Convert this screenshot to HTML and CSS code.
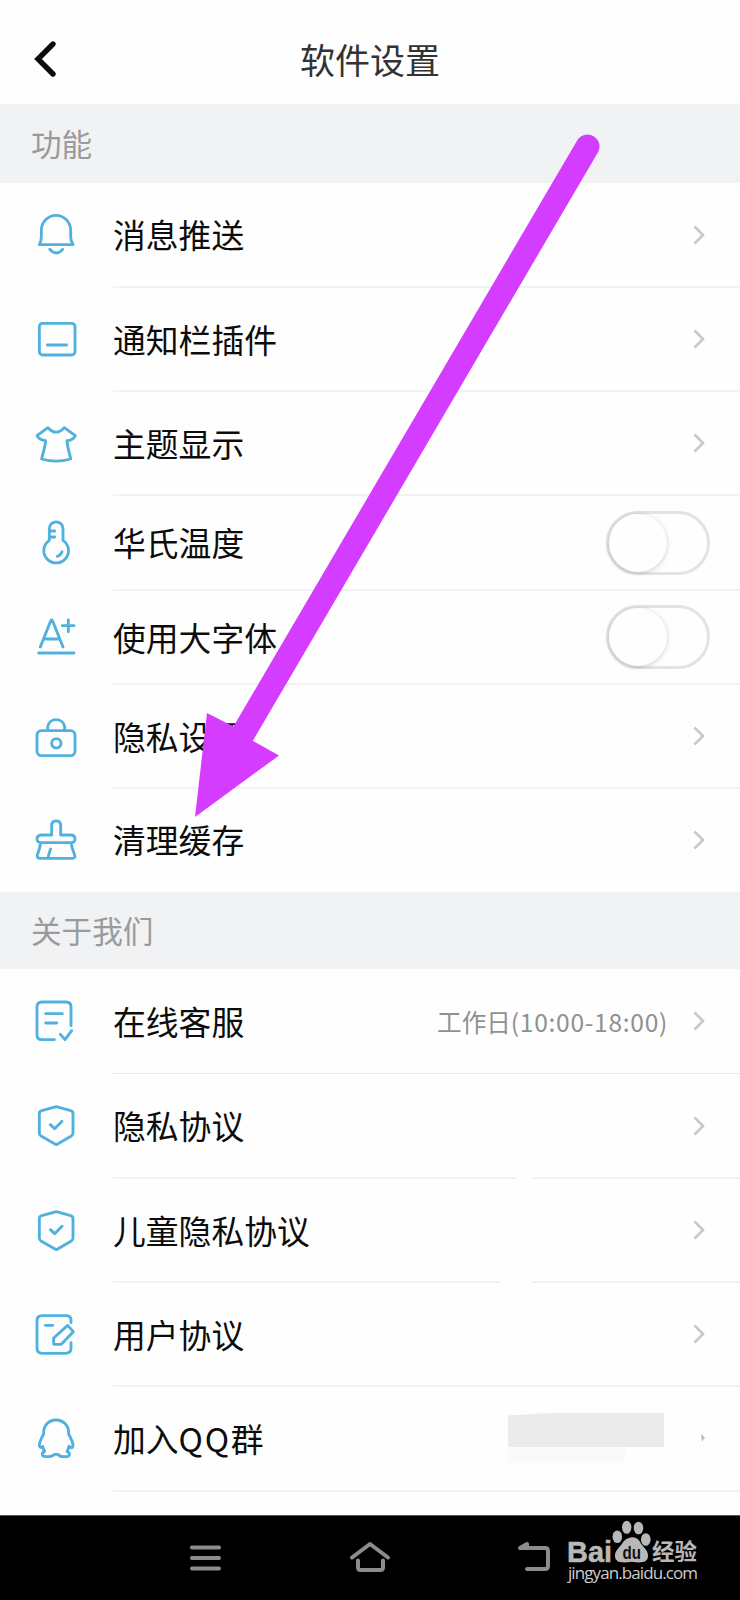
FILE: index.html
```html
<!DOCTYPE html>
<html lang="zh-CN">
<head>
<meta charset="utf-8">
<title>软件设置</title>
<link rel="stylesheet" href="styles.css">
</head>
<body>
<div class="screen">
  <header class="header">
    <svg class="back" viewBox="0 0 24 38"><path d="M19 4 4 19l15 15"/></svg>
    <h1 class="title">软件设置</h1>
  </header>

  <h2 class="section section-first">功能</h2>
  <ul class="list">
    <li class="row h105">
      <svg class="icon" viewBox="96 634 144 144"><path d="M118 738h101q-7-12-7-24v-19a44 45 0 0 0-88 0v19q0 14-6 24zM149 752q20 22 39 0"/></svg>
      <div class="body"><span class="label">消息推送</span><svg class="chev" viewBox="0 0 16 24"><path d="M2.500 3.500 11 12l-8.500 8.500"/></svg></div>
    </li>
    <li class="row h104">
      <svg class="icon" viewBox="96 43 144 144"><rect x="118" y="68" width="107" height="95" rx="10"/><path d="M142 133h58"/></svg>
      <div class="body"><span class="label">通知栏插件</span><svg class="chev" viewBox="0 0 16 24"><path d="M2.500 3.500 11 12l-8.500 8.500"/></svg></div>
    </li>
    <li class="row h104">
      <svg class="icon" viewBox="96 355 144 144"><path d="M144 381q25 27 49 0l33 24q-9 15-25 15c1 23 8 36 11 55q-44 13-87 0c3-19 11-33 12-55q-18-2-26-15z"/></svg>
      <div class="body"><span class="label">主题显示</span><svg class="chev" viewBox="0 0 16 24"><path d="M2.500 3.500 11 12l-8.500 8.500"/></svg></div>
    </li>
    <li class="row h95">
      <svg class="icon" viewBox="96 654 144 144"><path d="M148 721v-35a20 20 0 0 1 41 0v35a37 37 0 1 1-41 0zM149 693h15M149 711h15M172 769q10-3 14-14"/></svg>
      <div class="body"><span class="label">华氏温度</span><span class="toggle"><span class="knob"></span></span></div>
    </li>
    <li class="row h94">
      <svg class="icon" viewBox="96 66 144 144"><path d="M121 168l31-78q3-6 6 0l31 78M132 144h46M205 87v35M187 104h35M116 186h106"/></svg>
      <div class="body"><span class="label">使用大字体</span><span class="toggle"><span class="knob"></span></span></div>
    </li>
    <li class="row h104">
      <svg class="icon" viewBox="96 363 144 144"><rect x="111" y="419" width="114" height="75" rx="13"/><path d="M143 417v-10a26 26 0 0 1 51 0v10"/><circle cx="169" cy="457" r="14"/></svg>
      <div class="body"><span class="label">隐私设置</span><svg class="chev" viewBox="0 0 16 24"><path d="M2.500 3.500 11 12l-8.500 8.500"/></svg></div>
    </li>
    <li class="row h103 no-line">
      <svg class="icon" viewBox="96 678 144 144"><path d="M155 738v-32a14 14 0 0 1 27 0v32h29q14 0 14 12t-14 11h-86q-14 0-14-11t14-12zM122 762q-2 14-10 36-2 10 9 10h96q10 0 7-10-8-20-11-36M152 780q-5 12-8 28"/></svg>
      <div class="body"><span class="label">清理缓存</span><svg class="chev" viewBox="0 0 16 24"><path d="M2.500 3.500 11 12l-8.500 8.500"/></svg></div>
    </li>
  </ul>

  <h2 class="section">关于我们</h2>
  <ul class="list">
    <li class="row h105 thin">
      <svg class="icon" viewBox="96 349 144 144"><path d="M163 480h-37q-15 0-15-15v-83q0-15 15-15h72q15 0 15 15v56M137 402h50M137 430h33M181 464l14 16 20-27"/></svg>
      <div class="body"><span class="label">在线客服</span><span class="hours">工作日<span class="digits">(10:00-18:00)</span></span><svg class="chev" viewBox="0 0 16 24"><path d="M2.500 3.500 11 12l-8.500 8.500"/></svg></div>
    </li>
    <li class="row h105 break-a">
      <svg class="icon" viewBox="96 663 144 144"><path d="M169 680l43 12q7 2 7 9v58q0 6-5 9l-45 26-46-26q-5-3-5-9v-58q0-7 7-9zM151 734l13 12 22-22"/></svg>
      <div class="body"><span class="label">隐私协议</span><svg class="chev" viewBox="0 0 16 24"><path d="M2.500 3.500 11 12l-8.500 8.500"/></svg></div>
    </li>
    <li class="row h104 break-b">
      <svg class="icon" viewBox="96 663 144 144"><path d="M169 680l43 12q7 2 7 9v58q0 6-5 9l-45 26-46-26q-5-3-5-9v-58q0-7 7-9zM151 734l13 12 22-22"/></svg>
      <div class="body"><span class="label">儿童隐私协议</span><svg class="chev" viewBox="0 0 16 24"><path d="M2.500 3.500 11 12l-8.500 8.500"/></svg></div>
    </li>
    <li class="row h104">
      <svg class="icon" viewBox="96 389 144 144"><path d="M213 427v-8q0-13-15-13h-72q-15 0-15 15v83q0 15 15 15h72q15 0 15-15v-17M136 435h22M203 435l17 19-36 38h-23v-19z"/></svg>
      <div class="body"><span class="label">用户协议</span><svg class="chev" viewBox="0 0 16 24"><path d="M2.500 3.500 11 12l-8.500 8.500"/></svg></div>
    </li>
    <li class="row h105">
      <svg class="icon" viewBox="96 702 144 144"><path d="M131 762c-2-24 14-42 37-42s40 18 38 42c6 12 12 22 13 34 0 9-6 9-12 3q-2 10-6 15 9 4 7 11-1 6-17 5-12 0-17-7h-11q-6 7-18 7-17 0-18-6-1-7 7-10-4-6-6-15-6 8-10-1c-1-12 7-25 13-36z"/></svg>
      <div class="body"><span class="label">加入<span class="latin">QQ</span>群</span><span class="mosaic"></span><svg class="stub" viewBox="0 0 6 10"><path d="M1 1l4 4-2 2-1 2z"/></svg></div>
    </li>
  </ul>

  <nav class="nav">
    <svg class="nav-menu" viewBox="0 0 36 30"><path d="M4 4.500h27M4 15h27M4 25.500h27"/></svg>
    <svg class="nav-home" viewBox="0 0 42 34"><path d="M3 17.500 21 4l18 13.500M9 20.500v7q0 2.500 3 2.500h19q3 0 3-2.500v-7"/></svg>
    <svg class="nav-back" viewBox="0 0 36 32"><path d="M4 7h24q3 0 3 3v15q0 3-3 3H10"/><path d="M3 7l7-4v4z"/></svg>
  </nav>

  <svg class="watermark" viewBox="0 0 150 80">
    <text class="wm-bold" x="7" y="46.500" font-size="29" textLength="45" lengthAdjust="spacingAndGlyphs">Bai</text>
    <ellipse cx="57.300" cy="21.700" rx="4.800" ry="6.300"/>
    <ellipse cx="66.700" cy="12.300" rx="4.700" ry="6.500"/>
    <ellipse cx="78.500" cy="13" rx="4.800" ry="6.300"/>
    <ellipse cx="85.800" cy="24.500" rx="4.800" ry="6.300"/>
    <path d="M70 22.700c6-1.500 9 2 11 6 4 5 7 7 7 12 0 7-7 7.500-16.500 6-9.500 1.500-16.500 1-16.500-6 0-5 4-8 7-12 2-3 4-5.500 8-6z"/>
    <text class="wm-du" x="62.500" y="43.500" font-size="18" textLength="18.500" lengthAdjust="spacingAndGlyphs">du</text>
    <text class="wm-cjk" x="92" y="44.500" font-size="22.500" textLength="45">经验</text>
    <text class="wm-url" x="8" y="64" font-size="17" textLength="130">jingyan.baidu.com</text>
  </svg>

  <svg class="arrow" viewBox="0 0 740 1600">
    <path class="shaft" d="M587.500 146.500 240 739"/>
    <path class="head" d="M195 817 207 713l27.500 14L253 741l26 14.500z"/>
  </svg>
</div>
</body>
</html>
```
FILE: styles.css
```css
* { box-sizing: border-box; }

body {
  margin: 0;
  background: #fefefe;
  color: #0c0c0c;
  font-family: "Noto Sans CJK SC", sans-serif;
}

.screen {
  position: relative;
  width: 740px;
  height: 1600px;
  overflow: hidden;
  display: flex;
  flex-direction: column;
}

.header {
  display: grid;
  grid-template-columns: 68px 1fr 68px;
  align-items: center;
  height: 104px;
  padding-top: 14px;
}

.back {
  width: 24px;
  height: 38px;
  margin: 0 0 0 34px;
  fill: none;
  stroke: #0c0c0c;
  stroke-width: 5.4;
  stroke-linecap: round;
}

.title {
  margin: 0;
  text-align: center;
  font-size: 35px;
  font-weight: 400;
  line-height: 50px;
  color: #333;
}

.section {
  display: flex;
  align-items: center;
  height: 77px;
  margin: 0;
  padding: 0 0 2px 31px;
  background: #f1f2f4;
  color: #9a9a9c;
  font-size: 30.6px;
  font-weight: 400;
}

.section-first { height: 79px; }

.list {
  margin: 0;
  padding: 0;
  list-style: none;
}

.row {
  display: flex;
  gap: 33px;
  padding-left: 32px;
}

.h94 { height: 94px; }
.h95 { height: 95px; }
.h103 { height: 103px; }
.h104 { height: 104px; }
.h105 { height: 105px; }

.icon {
  width: 48px;
  height: 48px;
  align-self: center;
  margin-bottom: 3px;
  fill: none;
  stroke: #50b1de;
  stroke-width: 8.6;
  stroke-linecap: round;
  stroke-linejoin: round;
}

.body {
  position: relative;
  flex: 1;
  display: flex;
  align-items: center;
  padding-right: 32px;
  border-bottom: 2px solid #f2f2f2;
}

.no-line .body { border-bottom: 0; padding-bottom: 2px; }
.thin .body { border-bottom: 1px solid #e9e9e9; }

.break-a .body::after,
.break-b .body::after {
  content: "";
  position: absolute;
  bottom: -2px;
  height: 2px;
  background: #fefefe;
}

.break-a .body::after { left: 403px; width: 17px; }
.break-b .body::after { left: 387px; width: 32px; }

.label {
  flex: 1;
  padding-bottom: 1px;
  font-size: 32.8px;
  line-height: 46px;
}

.latin { letter-spacing: 1.7px; }

.chev {
  width: 16px;
  height: 24px;
  fill: none;
  stroke: #c8c8c8;
  stroke-width: 2.6;
}

.toggle {
  width: 104px;
  height: 64px;
  margin-right: -2px;
  border: 3px solid #e3e3e3;
  border-radius: 32px;
}

.knob {
  display: block;
  width: 58px;
  height: 58px;
  border-radius: 50%;
  background: #fefefe;
  box-shadow: 0 1px 5px rgba(0, 0, 0, 0.2);
}

.hours {
  margin-right: 24px;
  color: #909090;
  font-size: 24.6px;
}

.digits { letter-spacing: 0.7px; }

.mosaic {
  width: 156px;
  height: 50px;
  margin: 0 36px 2px 0;
  background:
    linear-gradient(#ebebeb, #ebebeb) 0 0 / 156px 34px no-repeat,
    linear-gradient(#fafafa, #fafafa) 0 34px / 117px 16px no-repeat;
  clip-path: polygon(0 3px, 50px 0, 100% 0, 100% 100%, 0 100%);
}

.stub {
  width: 6px;
  height: 10px;
  margin: 0 2px 2px 0;
  fill: #b8b8b8;
}

.nav {
  display: flex;
  align-items: center;
  height: 85px;
  margin-top: auto;
  padding: 0 0 2px 188px;
  border-top: 1px solid #555;
  background: #000;
}

.nav svg {
  fill: none;
  stroke: #8c8c8c;
  stroke-width: 4;
  stroke-linecap: round;
  stroke-linejoin: round;
}

.nav-menu { width: 36px; height: 30px; margin-top: 2px; }
.nav-home { width: 42px; height: 34px; margin-left: 125px; }
.nav-back { width: 36px; height: 32px; margin-left: 126px; }

.watermark {
  position: absolute;
  left: 560px;
  top: 1515px;
  width: 150px;
  height: 80px;
  fill: #b8b8b8;
}

.wm-bold { font-family: "Liberation Sans", sans-serif; font-weight: 700; stroke: #b8b8b8; stroke-width: 0.5; }
.wm-du { font-family: "Liberation Sans", sans-serif; font-weight: 700; fill: #111; }
.wm-cjk { font-family: "Noto Sans CJK SC", sans-serif; font-weight: 700; }
.wm-url { font-family: "Open Sans", sans-serif; fill: #ccc; }

.arrow {
  position: absolute;
  inset: 0;
  width: 740px;
  height: 1600px;
  pointer-events: none;
}

.shaft {
  fill: none;
  stroke: #d43cff;
  stroke-width: 24;
  stroke-linecap: round;
}

.head { fill: #d43cff; }
```
